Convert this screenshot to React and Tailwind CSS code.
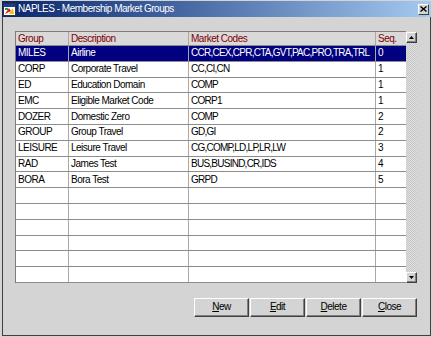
import React from "react";

// grid rows: [group, description, market codes, seq]
const rows = [
  ["MILES", "Airline", "CCR,CEX,CPR,CTA,GVT,PAC,PRO,TRA,TRL", "0"],
  ["CORP", "Corporate Travel", "CC,CI,CN", "1"],
  ["ED", "Education Domain", "COMP", "1"],
  ["EMC", "Eligible Market Code", "CORP1", "1"],
  ["DOZER", "Domestic Zero", "COMP", "2"],
  ["GROUP", "Group Travel", "GD,GI", "2"],
  ["LEISURE", "Leisure Travel", "CG,COMP,LD,LP,LR,LW", "3"],
  ["RAD", "James Test", "BUS,BUSIND,CR,IDS", "4"],
  ["BORA", "Bora Test", "GRPD", "5"],
  ["", "", "", ""],
  ["", "", "", ""],
  ["", "", "", ""],
  ["", "", "", ""],
  ["", "", "", ""],
  ["", "", "", ""],
];

const AppIcon = () => (
  <svg width="13" height="13" viewBox="0 0 13 13">
    <rect x="0.5" y="0.5" width="12" height="12" fill="#fff" stroke="#333" />
    <rect x="1" y="1" width="11" height="3" fill="#1c3c9c" />
    <path d="M2 11 L6 5 L8 8 Z" fill="#d42020" />
    <path d="M6 11 L10 5 L11 11 Z" fill="#e8c020" />
    <rect x="2" y="5" width="3" height="2" fill="#2a9a3a" />
  </svg>
);

const Arrow = ({ up }) => (
  <svg width="5" height="3" viewBox="0 0 5 3">
    <path d={up ? "M2.5 0 L5 3 L0 3 Z" : "M0 0 L5 0 L2.5 3 Z"} fill="#000" />
  </svg>
);

const ScrollButton = ({ up }) => (
  <div className="h-[11px] w-[11px] flex items-center justify-center bg-[#d4d4d4] border-t border-l border-t-white border-l-white border-b border-r border-b-[#404040] border-r-[#404040] shadow-[inset_-1px_-1px_0_#808080]">
    <Arrow up={up} />
  </div>
);

const Button = ({ u, post }) => (
  <button className="w-[55px] h-[19px] bg-[#d4d4d4] text-black border-t border-l border-t-white border-l-white border-b border-r border-b-[#404040] border-r-[#404040] shadow-[inset_-1px_-1px_0_#808080] flex items-center justify-center">
    <span className="underline underline-offset-1">{u}</span>
    {post}
  </button>
);

const widths = ["w-[53px]", "w-[120px]", "w-[187px]", "w-[30px]"];

export default function App() {
  return (
    <div className="w-[433px] h-[337px] bg-[#d4d4d4] pt-[1px] px-[2px] pb-[1px] overflow-hidden text-[10px] tracking-[-0.5px] font-['Liberation_Sans',Arial,sans-serif] leading-none">
      <div className="flex flex-col h-full">
        {/* title bar */}
        <div className="h-[16px] flex items-center pl-[1px] pr-[1px] bg-gradient-to-r from-[#0a246a] to-[#a6caf0] shrink-0">
          <AppIcon />
          <span className="ml-[2px] text-white">NAPLES - Membership Market Groups</span>
          <div className="ml-auto mr-[1px] h-[11px] w-[11px] flex items-center justify-center bg-[#d4d4d4] border-t border-l border-t-white border-l-white border-b border-r border-b-[#404040] border-r-[#404040]">
            <svg width="7" height="6" viewBox="0 0 7 6">
              <path d="M0.5 0.5 L6.5 5.5 M6.5 0.5 L0.5 5.5" stroke="#000" strokeWidth="1.4" />
            </svg>
          </div>
        </div>

        {/* body */}
        <div className="flex-1 flex flex-col border-l border-r border-b border-[#404040] pl-[12px] pr-[13px] pt-[14px]">
          <div className="flex">
            <div className="flex flex-col border-l border-t border-[#7c7c7c] bg-white">
              <div className="flex h-[14px] bg-[#d9d9d9] border-b border-[#8c8c8c] text-[#800000]">
                {["Group", "Description", "Market Codes", "Seq."].map((h, i) => (
                  <div
                    key={h}
                    className={`${widths[i]} px-[2px] flex items-center ${i < 3 ? "border-r border-[#a8a8a8]" : ""}`}
                  >
                    {h}
                  </div>
                ))}
              </div>
              {rows.map((r, ri) => (
                <div
                  key={ri}
                  className={`flex h-[15.8px] border-b border-[#8c8c8c] ${ri === 0 ? "bg-[#000080] text-white" : "text-black"}`}
                >
                  {r.map((c, i) => (
                    <div
                      key={i}
                      className={`${widths[i]} px-[2px] flex items-center whitespace-nowrap overflow-hidden ${i < 3 ? "border-r border-[#a8a8a8]" : ""} ${i === 2 ? "tracking-[-0.75px]" : ""}`}
                    >
                      {c}
                    </div>
                  ))}
                </div>
              ))}
            </div>

            {/* scrollbar */}
            <div className="w-[11px] flex flex-col mt-[1px]">
              <ScrollButton up />
              <div className="flex-1 bg-[repeating-conic-gradient(#c4c4c4_0_25%,#e2e2e2_0_50%)] bg-[length:2px_2px]" />
              <ScrollButton />
            </div>
          </div>

          {/* buttons */}
          <div className="flex justify-end gap-[1px] mt-[15px]">
            <Button u="N" post="ew" />
            <Button u="E" post="dit" />
            <Button u="D" post="elete" />
            <Button u="C" post="lose" />
          </div>
        </div>
      </div>
    </div>
  );
}
